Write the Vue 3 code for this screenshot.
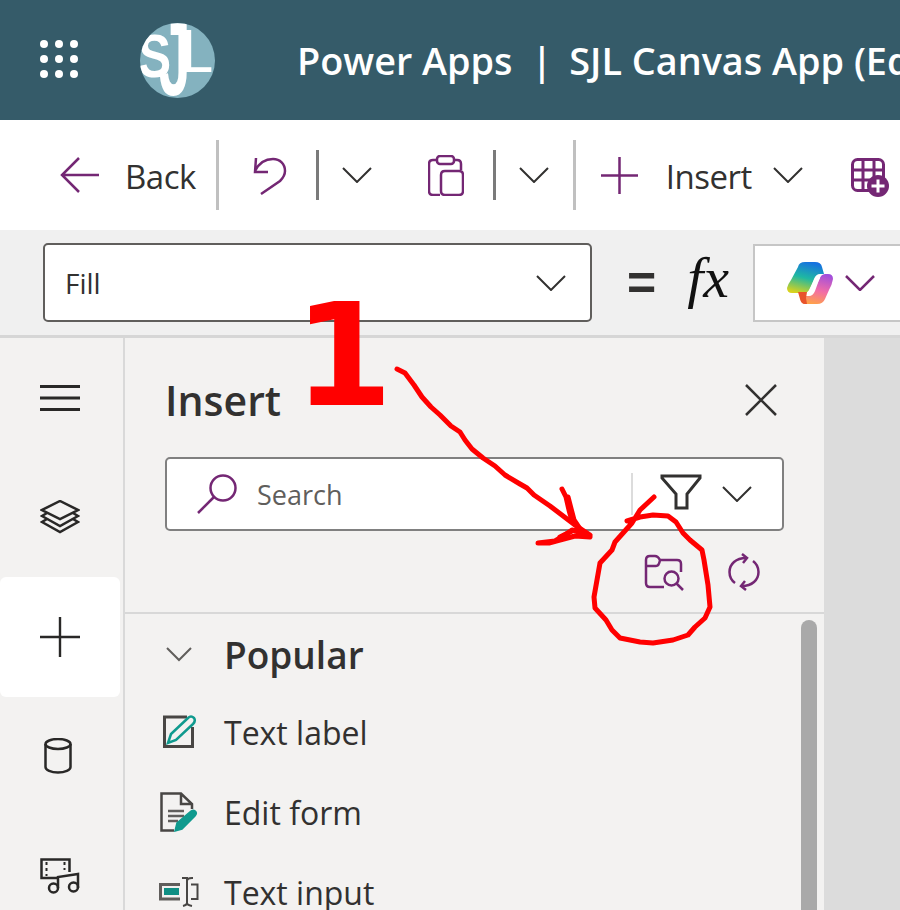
<template>
  <div class="studio">
    <header class="app-bar">
      <svg class="waffle" width="38" height="38" viewBox="0 0 38 38">
        <circle v-for="d in waffleDots" :key="d.id" :cx="d.x" :cy="d.y" r="4" fill="#fff" />
      </svg>
      <svg class="logo" width="75" height="75" viewBox="0 0 75 75">
        <defs>
          <clipPath id="logo-clip"><circle cx="37.5" cy="37.5" r="37.5" /></clipPath>
        </defs>
        <g clip-path="url(#logo-clip)">
          <rect width="75" height="75" fill="#84b2bf" />
          <text transform="translate(-2 54) scale(.8 1)" class="logo-s">S</text>
          <text transform="translate(19 72) scale(.55 1)" class="logo-j">J</text>
          <text transform="translate(41 49) scale(.95 1)" class="logo-l">L</text>
        </g>
      </svg>
      <div class="app-title">
        <span>Power Apps</span>
        <span class="title-bar">|</span>
        <span>SJL Canvas App (Edit)</span>
      </div>
    </header>

    <div class="toolbar">
      <svg class="back-icon" width="40" height="36" viewBox="0 0 40 36">
        <path d="M39 18H2M19 1 2 18l17 17" class="ic-purple" />
      </svg>
      <span class="tb-text back-text">Back</span>
      <i class="sep-tall sep-a"></i>
      <svg class="undo-icon" width="34" height="40" viewBox="0 0 34 40">
        <path d="M3 3 2 17h13M2 16C6 8 12 4 20 4c7 0 12 5 12 12 0 4-2 7-5 10L8 39" class="ic-purple" />
      </svg>
      <i class="sep-short sep-b"></i>
      <svg class="chev chev-a" width="30" height="16" viewBox="0 0 30 16"><path d="M1 1l14 14L29 1" class="ic-dark" /></svg>
      <svg class="clip-icon" width="36" height="41" viewBox="0 0 36 41">
        <path d="M9 5H5Q1 5 1 9v27q0 4 4 4h7M26 5h3q4 0 4 4v6" class="ic-purple" />
        <rect x="9" y="1" width="17" height="8" rx="3" class="ic-purple" />
        <path d="M13 20q0-4 4-4h14q4 0 4 4v16q0 4-4 4H17q-4 0-4-4z" class="ic-purple" />
      </svg>
      <i class="sep-short sep-c"></i>
      <svg class="chev chev-b" width="30" height="16" viewBox="0 0 30 16"><path d="M1 1l14 14L29 1" class="ic-dark" /></svg>
      <i class="sep-tall sep-d"></i>
      <svg class="plus-icon" width="37" height="37" viewBox="0 0 37 37"><path d="M18.5 0v37M0 18.5h37" class="ic-purple" /></svg>
      <span class="tb-text insert-text">Insert</span>
      <svg class="chev chev-c" width="30" height="16" viewBox="0 0 30 16"><path d="M1 1l14 14L29 1" class="ic-dark" /></svg>
      <svg class="table-icon" width="38" height="40" viewBox="0 0 38 40">
        <rect x="1.5" y="1.5" width="31" height="31" rx="5" fill="none" stroke="#742774" stroke-width="3" />
        <path d="M1 12h32M1 22h24M12 1v32M23 1v24" fill="none" stroke="#742774" stroke-width="3" />
        <circle cx="27" cy="28" r="11" fill="#742774" />
        <path d="M27 21.500v13M20.500 28h13" stroke="#fff" stroke-width="3" />
      </svg>
    </div>

    <div class="formula-bar">
      <div class="prop-select">
        <span>Fill</span>
        <svg width="30" height="16" viewBox="0 0 30 16"><path d="M1 1l14 14L29 1" class="ic-dark" /></svg>
      </div>
      <span class="equals">=</span>
      <span class="fx">fx</span>
      <div class="formula-input">
        <svg width="46" height="42" viewBox="0 0 46 42">
          <defs>
            <linearGradient id="cp-left" x1="0.6" y1="0" x2="0.3" y2="1">
              <stop offset="0" stop-color="#1672e0" />
              <stop offset="0.5" stop-color="#1fb8a2" />
              <stop offset="1" stop-color="#d8d21e" />
            </linearGradient>
            <linearGradient id="cp-right" x1="0.7" y1="0" x2="0.4" y2="1">
              <stop offset="0" stop-color="#a24fdc" />
              <stop offset="0.55" stop-color="#f26da6" />
              <stop offset="1" stop-color="#ffa14a" />
            </linearGradient>
          </defs>
          <path d="M11 5Q12 0 18 0H28Q34 0 35 5L37 12H33Q29 12 27 17L23 27Q21 31 16 31H5Q0 31 0 26Q1 22 4 18Z" fill="url(#cp-left)" />
          <path d="M13 34H22Q26 34 28 29L32 18Q34 12 38 12H41Q46 12 46 17Q45 23 42 28L38 37Q36 42 30 42H18Q14 42 13 34Z" fill="url(#cp-right)" />
          <path d="M11 30H20L19 36 20 42H18Q14 42 13 37Z" fill="#e8532c" />
          <path d="M28 16h5l-7 14h-5z" fill="#fff" />
        </svg>
        <svg width="30" height="16" viewBox="0 0 30 16"><path d="M1 1l14 14L29 1" class="ic-purple" /></svg>
      </div>
    </div>

    <div class="workspace">
      <nav class="rail">
        <div class="rail-slot">
          <svg width="40" height="28" viewBox="0 0 40 28"><path d="M0 2.5h40M0 14h40M0 25.5h40" stroke="#292827" stroke-width="3" /></svg>
        </div>
        <div class="rail-slot">
          <svg width="40" height="34" viewBox="0 0 40 34">
            <path d="M20 1 38 10 20 19 2 10Z" class="ic-rail" />
            <path d="M7 13 2 16 20 26 38 16 33 13" class="ic-rail" />
            <path d="M7 19 2 22 20 32 38 22 33 19" class="ic-rail" />
          </svg>
        </div>
        <div class="rail-slot active">
          <svg width="40" height="40" viewBox="0 0 40 40"><path d="M20 0v40M0 20h40" stroke="#292827" stroke-width="2.4" /></svg>
        </div>
        <div class="rail-slot">
          <svg class="cylinder" width="28" height="36" viewBox="0 0 28 36">
            <ellipse cx="14" cy="6" rx="12.5" ry="5" class="ic-rail" />
            <path d="M1.5 6v23c0 3 5.500 5.500 12.500 5.500S26.500 32 26.500 29V6" class="ic-rail" />
          </svg>
        </div>
        <div class="rail-slot">
          <svg width="40" height="36" viewBox="0 0 40 36">
            <path d="M19 20H1.500V1.500h28V14" class="ic-rail" />
            <path d="M6.500 4v3M6.500 10v3M6.500 16v2M24.500 4v3M24.500 10v2" stroke="#292827" stroke-width="2" />
            <path d="M18 30V19l20-3v14" class="ic-rail" />
            <circle cx="13.500" cy="30" r="4.500" class="ic-rail" />
            <circle cx="33.500" cy="29" r="4.500" class="ic-rail" />
          </svg>
        </div>
      </nav>

      <section class="insert-panel">
        <div class="panel-head">
          <h2>Insert</h2>
          <svg width="32" height="32" viewBox="0 0 32 32"><path d="M1 1l30 30M31 1 1 31" stroke="#323130" stroke-width="2.500" /></svg>
        </div>

        <div class="search-box">
          <svg class="search-icon" width="40" height="40" viewBox="0 0 40 40">
            <circle cx="26" cy="14" r="12.500" class="ic-purple" />
            <path d="M17 23 1 39" class="ic-purple" />
          </svg>
          <span class="search-text">Search</span>
          <i class="search-sep"></i>
          <svg class="funnel" width="42" height="37" viewBox="0 0 42 37">
            <path d="M2 2H40V4L27 20V34H16V20L2 4Z" fill="none" stroke="#323130" stroke-width="3" />
          </svg>
          <svg class="chev search-chev" width="30" height="16" viewBox="0 0 30 16"><path d="M1 1l14 14L29 1" class="ic-dark" /></svg>
        </div>

        <div class="panel-tools">
          <svg width="40" height="37" viewBox="0 0 40 37">
            <path d="M20 33H6Q2 33 2 29V6Q2 2 6 2H11Q14 2 16 6H33Q37 6 37 10V18M2 12H12Q15 12 16 6" class="ic-purple" />
            <circle cx="27.500" cy="24.500" r="7" class="ic-purple" />
            <path d="M32.500 29.500 39 36" class="ic-purple" />
          </svg>
          <svg width="32" height="38" viewBox="0 0 32 38">
            <path d="M7 30C3 27 1.500 23 1.500 19 1.500 11 8 5 18 5" class="ic-purple" />
            <path d="M14 1l5 4-4 5" class="ic-purple" />
            <path d="M25 8C29 11 30.500 15 30.500 19 30.500 27 24 33 14 33" class="ic-purple" />
            <path d="M18 37l-5-4 4-5" class="ic-purple" />
          </svg>
        </div>

        <div class="list">
          <div class="group-row">
            <svg class="group-chev" width="26" height="15" viewBox="0 0 26 15"><path d="M1 1l12 12L25 1" fill="none" stroke="#605e5c" stroke-width="2" /></svg>
            <span>Popular</span>
          </div>
          <div class="ctl-row">
            <div class="ctl-icon">
              <svg width="36" height="34" viewBox="0 0 36 34">
                <path d="M26 2H3.500V31.500H31.500V12" fill="none" stroke="#484644" stroke-width="3" />
                <path d="M7 28 10 19 27 3Q30 0 33 3 35 6 32 9L15 25Z" fill="#f3f2f1" stroke="#0f9a8e" stroke-width="2.500" />
              </svg>
            </div>
            <span>Text label</span>
          </div>
          <div class="ctl-row">
            <div class="ctl-icon">
              <svg width="38" height="40" viewBox="0 0 38 40">
                <path d="M14 38.500H1.500V1.500H21L32 12V17M21 1.500V12H32" fill="none" stroke="#484644" stroke-width="2.500" />
                <path d="M8 19H24M8 24H24M8 29H18" stroke="#605e5c" stroke-width="2.500" />
                <path d="M15 39 17 31 31 19Q34 17 36 20 37 22 35 24L22 37Z" fill="#0f9a8e" stroke="#0f9a8e" stroke-width="1.500" />
              </svg>
            </div>
            <span>Edit form</span>
          </div>
          <div class="ctl-row">
            <div class="ctl-icon">
              <svg width="40" height="30" viewBox="0 0 40 30">
                <path d="M21 22H1.500V7.500H21" fill="none" stroke="#605e5c" stroke-width="3" />
                <rect x="5" y="11" width="15" height="7" fill="#0f8f84" />
                <path d="M23 1h6M33 1h1M28 1q0 0 0 3V26q0 2-4 3M28 4q0-3 5-3M28 26q0 2 5 3M32 7.500h6.500V22H32" fill="none" stroke="#484644" stroke-width="2" />
              </svg>
            </div>
            <span>Text input</span>
          </div>
        </div>

        <div class="scroll-thumb"></div>
      </section>

      <div class="canvas-area"></div>
    </div>

    <!-- marker annotations drawn on top of the screenshot -->
    <span class="big-one">1</span>
    <svg class="scribble" width="900" height="910" viewBox="0 0 900 910">
      <path
        d="M397 369 405 373 414 385 422 397 431 407 440 415 451 426 460 432 465 440 472 449 483 458 495 466 505 475 520 484 527 488 534 495 550 506 575 525 590 535"
      />
      <path d="M562 489 566 497 569 510 572 521 585 535 590 537 575 536 560 540 549 543 538 543 555 541 565 535 572 530 586 533" />
      <path d="M568 497 574 520 582 532M560 537 572 531" />
      <path
        d="M654 497 640 510 632 523 615 542 612 550 600 563 597 580 594 597 595 608 606 620 612 630 620 638 640 642 653 643 673 640 688 635 695 627 705 618 710 607 708 585 704 560 702 550 690 540 683 533 676 522 668 516 653 515 640 517 627 521"
      />
    </svg>
  </div>
</template>

<script setup>
const waffleDots = []
for (let row = 0; row < 3; row++) {
  for (let col = 0; col < 3; col++) {
    waffleDots.push({ id: row * 3 + col, x: 4 + col * 15, y: 4 + row * 15 })
  }
}
</script>

<style>
html,
body {
  margin: 0;
  background: #fff;
}
</style>

<style scoped>
.studio {
  position: relative;
  width: 900px;
  height: 910px;
  overflow: hidden;
  font-family: "Open Sans", "Noto Sans", sans-serif;
  color: #323130;
  background: #fff;
}

svg {
  display: block;
  flex-shrink: 0;
}

.ic-purple {
  fill: none;
  stroke: #742774;
  stroke-width: 2.5;
}

.ic-dark {
  fill: none;
  stroke: #323130;
  stroke-width: 2;
}

.ic-rail {
  fill: none;
  stroke: #292827;
  stroke-width: 2.5;
}

.app-bar {
  height: 120px;
  background: #355b69;
  display: flex;
  align-items: center;
  padding-left: 40px;
  white-space: nowrap;
  overflow: hidden;
}

.waffle {
  margin-top: -2px;
}

.logo {
  margin-left: 62px;
}

.logo-s,
.logo-j,
.logo-l {
  font-family: "Liberation Sans", sans-serif;
  fill: #fff;
}

.logo-s {
  font-size: 62px;
  font-weight: 700;
}

.logo-j {
  font-size: 103px;
  font-weight: 700;
}

.logo-l {
  font-size: 61px;
}

.app-title {
  display: flex;
  margin-left: 82px;
  font-size: 37.8px;
  font-weight: 600;
  color: #fff;
}

.title-bar {
  margin: 0 17px 0 19px;
}

.toolbar {
  height: 110px;
  display: flex;
  align-items: center;
  padding-left: 60px;
  white-space: nowrap;
  overflow: hidden;
}

.tb-text {
  font-size: 33px;
  letter-spacing: -0.5px;
  color: #323130;
  margin-top: 3px;
}

.back-text {
  margin-left: 25px;
}

.sep-tall,
.sep-short {
  display: block;
  flex-shrink: 0;
  width: 3px;
}

.sep-tall {
  height: 70px;
  background: #c0c0c0;
}

.sep-short {
  height: 50px;
  background: #7a7a7a;
}

.sep-a {
  margin-left: 20px;
}

.undo-icon {
  margin-left: 34px;
}

.sep-b {
  margin-left: 29px;
}

.chev-a {
  margin-left: 23px;
}

.clip-icon {
  margin-left: 56px;
}

.sep-c {
  margin-left: 29px;
}

.chev-b {
  margin-left: 23px;
}

.sep-d {
  margin-left: 24px;
}

.plus-icon {
  margin-left: 25px;
}

.insert-text {
  margin-left: 28px;
}

.chev-c {
  margin-left: 21px;
}

.table-icon {
  margin-left: 48px;
  margin-top: 5px;
}

.formula-bar {
  height: 105px;
  background: #f0f0f0;
  border-bottom: 3px solid #d6d6d6;
  display: flex;
  align-items: center;
  padding-left: 43px;
}

.prop-select {
  width: 549px;
  height: 79px;
  box-sizing: border-box;
  background: #fff;
  border: 2px solid #605e5c;
  border-radius: 5px;
  display: flex;
  align-items: center;
  justify-content: space-between;
  padding: 0 24px 0 20px;
  font-size: 28px;
}

.equals {
  margin-left: 35px;
  font-family: "Liberation Sans", sans-serif;
  font-size: 50px;
  font-weight: 700;
  line-height: 1;
}

.fx {
  margin-left: 31px;
  font-family: "Liberation Serif", serif;
  font-style: italic;
  font-size: 58px;
  line-height: 1;
  color: #111;
  margin-top: -10px;
}

.formula-input {
  margin-left: 24px;
  flex: 1;
  height: 78px;
  box-sizing: border-box;
  background: #fff;
  border: 2px solid #c6c6c6;
  border-right: 0;
  display: flex;
  align-items: center;
  gap: 12px;
  padding-left: 32px;
}

.workspace {
  display: flex;
  height: 572px;
}

.rail {
  width: 123px;
  flex-shrink: 0;
  background: #f3f2f1;
  border-right: 2px solid #d9d9d9;
  display: flex;
  flex-direction: column;
}

.rail-slot {
  width: 120px;
  height: 119.5px;
  flex-shrink: 0;
  display: flex;
  align-items: center;
  justify-content: center;
}

.rail-slot.active {
  background: #fff;
  border-radius: 6px;
}

.cylinder {
  margin-right: 4px;
}

.insert-panel {
  position: relative;
  width: 699px;
  flex-shrink: 0;
  background: #f3f2f1;
  overflow: hidden;
}

.panel-head {
  display: flex;
  align-items: center;
  justify-content: space-between;
  height: 50px;
  padding: 37px 47px 0 40px;
}

.panel-head h2 {
  margin: 0;
  font-size: 41px;
  font-weight: 600;
  color: #323130;
}

.search-box {
  margin: 32px 0 0 40px;
  width: 619px;
  height: 74px;
  box-sizing: border-box;
  background: #fff;
  border: 2px solid #808080;
  border-radius: 5px;
  display: flex;
  align-items: center;
  padding-left: 30px;
}

.search-text {
  margin-left: 20px;
  font-size: 27px;
  color: #605e5c;
}

.search-sep {
  display: block;
  width: 2px;
  height: 42px;
  background: #dcdcdc;
  margin-left: auto;
}

.funnel {
  margin-left: 27px;
  margin-top: -4px;
}

.search-chev {
  margin: 0 30px 0 20px;
}

.panel-tools {
  display: flex;
  align-items: center;
  justify-content: flex-end;
  gap: 44px;
  height: 38px;
  margin-top: 22px;
  padding-right: 64px;
}

.list {
  margin-top: 21px;
  border-top: 2px solid #d8d8d8;
  padding-top: 3px;
}

.group-row {
  display: flex;
  align-items: center;
  height: 75px;
  padding-left: 41px;
  gap: 32px;
  font-size: 37px;
  font-weight: 600;
}

.ctl-row {
  display: flex;
  align-items: center;
  height: 80px;
  padding-left: 32px;
  font-size: 32px;
}

.ctl-icon {
  width: 44px;
  margin-right: 23px;
  display: flex;
  justify-content: center;
}

.scroll-thumb {
  position: absolute;
  left: 676px;
  top: 282px;
  width: 16px;
  height: 400px;
  border-radius: 8px;
  background: #a9a9a9;
}

.canvas-area {
  flex: 1;
  background: #dcdcdc;
}

.big-one {
  position: absolute;
  left: 294px;
  top: 285px;
  font-family: "DejaVu Sans", sans-serif;
  font-weight: 700;
  font-size: 142px;
  line-height: 1;
  color: #ff0000;
}

.scribble {
  position: absolute;
  left: 0;
  top: 0;
  pointer-events: none;
  fill: none;
  stroke: #ff0000;
  stroke-width: 5;
  stroke-linecap: round;
  stroke-linejoin: round;
}
</style>
